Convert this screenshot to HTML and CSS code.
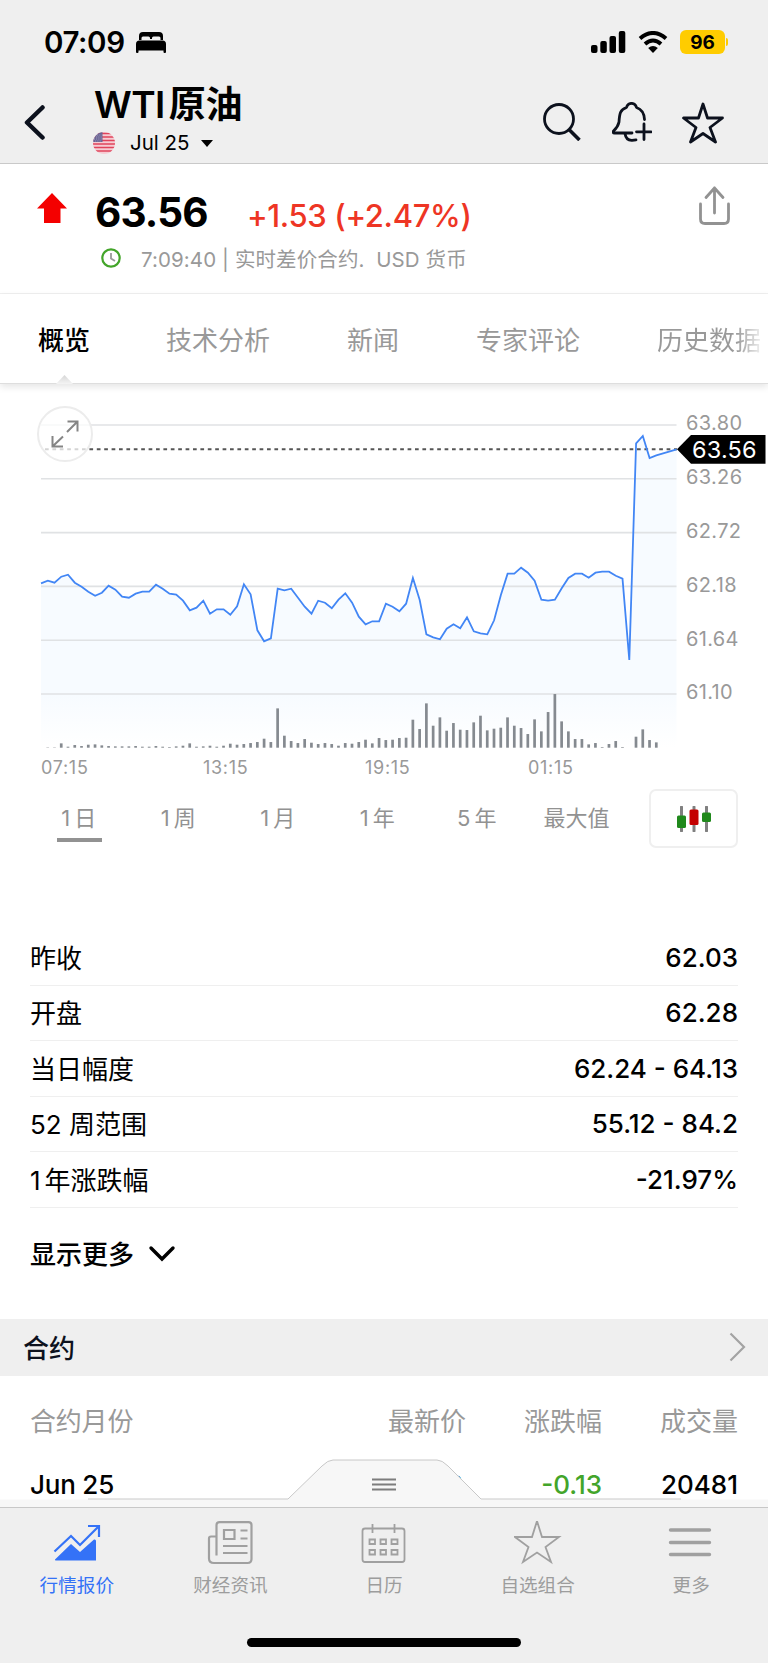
FILE: index.html
```html
<!DOCTYPE html>
<html lang="zh-CN">

<head>
  <meta charset="UTF-8">
  <meta name="viewport" content="width=device-width, initial-scale=1.0">
  <title>WTI原油</title>
  <link rel="stylesheet" href="styles.css">
</head>

<body>
  <header class="header">
    <div class="status-bar">
      <span class="time">07:09</span>
      <svg class="bed" width="30" height="21" viewBox="0 0 30 21">
        <path d="M3 8V4Q3 0 7 0H23Q27 0 27 4V8H24.500V6Q24.500 4.500 23 4.500H17.500Q16 4.500 16 6V7H14V6Q14 4.500 12.500 4.500H7Q5.500 4.500 5.500 6V8Z" />
        <path d="M0 12Q0 8.500 3.500 8.500H26.500Q30 8.500 30 12V20Q30 21 29 21H28.500Q27.500 21 27.500 20V18.500H2.500V20Q2.500 21 1.500 21H1Q0 21 0 20Z" />
      </svg>
      <svg class="signal" width="35" height="22" viewBox="0 0 35 22">
        <rect x="0" y="14" width="6.500" height="8" rx="2" />
        <rect x="9.300" y="10" width="6.500" height="12" rx="2" />
        <rect x="18.500" y="5" width="6.500" height="17" rx="2" />
        <rect x="27.800" y="0" width="6.500" height="22" rx="2" />
      </svg>
      <svg class="wifi" width="30" height="22" viewBox="0 0 30 22">
        <path d="M2 7.500Q15 -3.500 28 7.500" />
        <path d="M7 13Q15 6 23 13" />
        <path class="dot" d="M10.200 17Q15 13 19.800 17L15 22Z" />
      </svg>
      <span class="battery">96</span>
      <span class="battery-tip"></span>
    </div>
    <div class="title-bar">
      <svg class="back" width="21" height="35" viewBox="0 0 21 35">
        <path d="M18.500 2.500L3 17.500L18.500 32.500" />
      </svg>
      <div class="title">
        <h1><span class="latin">WTI</span>原油</h1>
        <div class="contract">
          <svg width="22" height="22" viewBox="0 0 22 22">
            <clipPath id="round"><circle cx="11" cy="11" r="11" /></clipPath>
            <g clip-path="url(#round)">
              <rect width="22" height="22" fill="#f6ccd3" />
              <path d="M0 1.500H22M0 5H22M0 8.500H22M0 12H22M0 15.500H22M0 19H22" stroke="#e0445c" stroke-width="1.300" />
              <rect width="9.500" height="10" fill="#6a6594" />
              <path d="M2 3H9M1 5H9M1 7H9M0 9H9" stroke="#b9b6d2" stroke-width=".8" stroke-dasharray="1 1.200" />
            </g>
          </svg>
          <span>Jul 25</span>
          <i class="caret"></i>
        </div>
      </div>
      <div class="actions">
        <svg width="38" height="38" viewBox="0 0 38 38">
          <circle cx="16" cy="16" r="14.500" />
          <path class="thick" d="M26 26.500L36.500 37" />
        </svg>
        <svg width="40" height="40" viewBox="0 0 40 40">
          <path d="M20 31H2.500Q0.500 31 1.500 29Q6 25 7 20C7.500 12 8 7.500 14.500 5.500C16 0 23 0 24.500 5.500Q32 8 32.500 17.500" />
          <path d="M13 31.500Q14 38.500 20 38.300L24 37.800" />
          <path d="M32 22V37.500M24.500 29.800H39" />
        </svg>
        <svg width="42" height="42" viewBox="0 0 42 42">
          <path d="M21 2L25.500 16H40.500L28 25.500L33.500 40L21 31.500L8.500 40L14 25.500L1.500 16H16.500Z" />
        </svg>
      </div>
    </div>
  </header>

  <section class="quote">
    <svg class="arrow-up" width="30" height="30" viewBox="0 0 30 30">
      <path d="M15 0L30 15.500H23.500V30H7V15.500H0Z" />
    </svg>
    <div class="quote-body">
      <div class="quote-price">
        <span class="last">63.56</span>
        <span class="change">+1.53 (+2.47%)</span>
      </div>
      <div class="quote-info">
        <svg width="20" height="20" viewBox="0 0 20 20">
          <circle cx="10" cy="10" r="8.700" />
          <path d="M10 5V10.500L14 13" />
        </svg>
        <span class="info">7:09:40 | 实时差价合约.&nbsp; USD 货币</span>
      </div>
    </div>
    <svg class="share" width="31" height="39" viewBox="0 0 31 39">
      <path d="M1.500 18V33Q1.500 37.500 6 37.500H25Q29.500 37.500 29.500 33V18M15.500 27V2M7 11.500L15.500 2L24 11.500" />
    </svg>
  </section>

  <nav class="tabs">
    <span class="tab active">概览</span>
    <span class="tab">技术分析</span>
    <span class="tab">新闻</span>
    <span class="tab">专家评论</span>
    <span class="tab">历史数据</span>
  </nav>

  <section class="chart">
    <svg width="768" height="396" viewBox="0 0 768 396">
      <defs>
        <linearGradient id="fill" x1="0" y1="0" x2="0" y2="1">
          <stop offset="0" stop-color="#f7fbff" />
          <stop offset="0.830" stop-color="#f7fbff" />
          <stop offset="1" stop-color="#ffffff" />
        </linearGradient>
      </defs>
      <polygon id="area" fill="url(#fill)" />
      <g id="grid" class="grid"></g>
      <line class="last-line" x1="45" y1="65.300" x2="677" y2="65.300" />
      <g id="volume" class="volume"></g>
      <polyline id="line" class="line" />
      <g id="priceLabels" class="price-label"></g>
      <g class="time-label">
        <text x="41" y="389.500">07:15</text>
        <text x="203" y="389.500">13:15</text>
        <text x="365" y="389.500">19:15</text>
        <text x="528" y="389.500">01:15</text>
      </g>
      <polygon points="677,65.300 691,51 765.500,51 765.500,79.700 691,79.700" />
      <text class="tag-label" x="692" y="73.500">63.56</text>
    </svg>
    <button class="expand">
      <svg width="28" height="28" viewBox="0 0 28 28">
        <path d="M16.500 1.500H26.500V11.500M26.500 1.500L16 12M1.500 16V26.500H12M1.500 26.500L12 16.500" />
      </svg>
    </button>
  </section>

  <div class="ranges">
    <span class="range active"><span class="num">1</span>日</span>
    <span class="range"><span class="num">1</span>周</span>
    <span class="range"><span class="num">1</span>月</span>
    <span class="range"><span class="num">1</span>年</span>
    <span class="range"><span class="num">5</span>年</span>
    <span class="range wide">最大值</span>
    <button class="candle">
      <svg width="36" height="26" viewBox="0 0 36 26">
        <path d="M5.500 1V25M18 1V25M30.500 1V25" stroke="#808080" stroke-width="3" stroke-linecap="round" />
        <rect x="1" y="9.500" width="9" height="12.500" rx="1.500" fill="#20891c" />
        <rect x="13.500" y="3.500" width="9" height="15.500" rx="1.500" fill="#c40000" />
        <rect x="26" y="6.500" width="9" height="9.500" rx="1.500" fill="#20891c" />
      </svg>
    </button>
  </div>

  <section class="stats">
    <div class="stat"><span>昨收</span><b>62.03</b></div>
    <div class="stat"><span>开盘</span><b>62.28</b></div>
    <div class="stat"><span>当日幅度</span><b>62.24 - 64.13</b></div>
    <div class="stat"><span>52 周范围</span><b>55.12 - 84.2</b></div>
    <div class="stat"><span><span class="num">1</span>年涨跌幅</span><b>-21.97%</b></div>
    <div class="more">
      <span>显示更多</span>
      <svg width="28" height="17" viewBox="0 0 28 17">
        <path d="M3 3L14 14L25 3" />
      </svg>
    </div>
  </section>

  <div class="section-title">
    <h2>合约</h2>
    <svg width="17" height="30" viewBox="0 0 17 30">
      <path d="M1.500 1.500L15 15L1.500 28.500" />
    </svg>
  </div>
  <div class="contracts">
    <div class="contract-row head"><span>合约月份</span><span>最新价</span><span>涨跌幅</span><span>成交量</span></div>
    <div class="contract-row"><span>Jun 25</span><span class="price">63.62</span><span class="down">-0.13</span><span>20481</span></div>
  </div>

  <footer class="bottom">
    <svg class="handle" width="768" height="48" viewBox="0 0 768 48">
      <path d="M0 40.500H288L322 7Q328 1 333 1H437Q442 1 448 7L481 40.500H768V48H0Z" fill="#f7f7f7" />
      <path d="M88 40H288L322 7Q328 1 333 1H437Q442 1 448 7L481 40H681" fill="none" stroke="#c8c8c8" />
      <path d="M372 20.500H396M372 25.500H396M372 30.500H396" stroke="#7d7d7d" stroke-width="1.800" />
    </svg>
    <div class="tab-bar">
      <div class="tab-item selected">
        <svg width="48" height="44" viewBox="0 0 48 44">
          <path d="M1.500 30.500L18 15L27 24L45 6M35 5H46V16" fill="none" stroke="#3472f7" stroke-width="2.600" />
          <path d="M2 38.500L18 23L27 31L41 18.500Q43 18 43 20V39.500H3Q1.500 39.500 2 38.500Z" fill="#3472f7" />
        </svg>
        <span>行情报价</span>
      </div>
      <div class="tab-item">
        <svg width="48" height="44" viewBox="0 0 48 44">
          <path d="M10.500 34.500V4Q10.500 1.200 13.500 1.200H42.500Q45.500 1.200 45.500 4V38Q45.500 42 41.500 42H8Q3 42 3 37.500V17.500Q3 15.500 5 15.500H10.500M18 9H28.500V18H18ZM34.500 9.500H41.500M34.500 17.500H41.500M17 25H41.500M17 32H41.500" />
        </svg>
        <span>财经资讯</span>
      </div>
      <div class="tab-item">
        <svg width="48" height="44" viewBox="0 0 48 44">
          <path class="thin" d="M2.500 10Q2.500 7.500 5 7.500H42Q44.500 7.500 44.500 10V38.500Q44.500 41 42 41H5Q2.500 41 2.500 38.500ZM12.500 3V12M34.500 3V12M9.500 18.500H15V23H9.500ZM20.500 18.500H26V23H20.500ZM31.500 18.500H37.500V23H31.500ZM9.500 29H15V33.500H9.500ZM20.500 29H26V33.500H20.500ZM31.500 29H37.500V33.500H31.500Z" />
        </svg>
        <span>日历</span>
      </div>
      <div class="tab-item">
        <svg width="48" height="44" viewBox="0 0 48 44">
          <path class="thin" d="M23 0L28 16H45L31.500 26L37 41L23 31.500L9 41L14.500 26L1 16H18Z" />
        </svg>
        <span>自选组合</span>
      </div>
      <div class="tab-item">
        <svg width="48" height="44" viewBox="0 0 48 44">
          <path class="bars" d="M3.500 9H42.500M3.500 21.500H42.500M3.500 33.500H42.500" />
        </svg>
        <span>更多</span>
      </div>
    </div>
    <div class="home-indicator"></div>
  </footer>

  <script>
    // plot values are stored at 3 units per pixel, measured from the top
    const prices = [610, 602, 608, 590, 584, 608, 620, 635, 647, 638, 617, 629, 650, 653, 641, 635, 635, 614, 626, 641,
      644, 662, 691, 683, 662, 701, 688, 688, 704, 679, 613, 643, 751, 784, 775, 626, 631, 626, 653, 680,
      701, 662, 668, 685, 659, 640, 668, 710, 733, 724, 724, 671, 680, 694, 671, 594, 660, 763, 772, 778,
      746, 733, 745, 712, 754, 760, 763, 721, 646, 581, 581, 563, 578, 602, 659, 662, 659, 625, 594, 581,
      581, 593, 578, 575, 575, 587, 596, 840, 190, 168, 234, 226, 220, 214, 208];
    const volumes = [0, 1, 1, 13, 3, 8, 5, 9, 10, 7, 5, 4, 4, 4, 5, 3, 3, 5, 3, 2,
      4, 6, 13, 3, 4, 6, 3, 6, 12, 9, 11, 14, 17, 27, 17, 118, 36, 20, 14, 26,
      15, 11, 14, 11, 6, 14, 12, 17, 24, 13, 29, 23, 24, 29, 30, 84, 56, 133, 66, 91,
      51, 74, 54, 53, 76, 96, 52, 57, 60, 91, 66, 59, 41, 85, 49, 107, 161, 79, 49, 26,
      26, 10, 14, 2, 11, 20, 2, 0, 33, 55, 23, 16];
    const left = 41;
    const step = 6.762;
    const bottom = 363.7;

    const points = prices.map((v, i) => `${(left + i * step).toFixed(1)},${(v / 3 - 4).toFixed(1)}`).join(" ");
    document.getElementById("line").setAttribute("points", points);
    document.getElementById("area").setAttribute("points", `${left},${bottom} ${points} 676.5,${bottom}`);

    let bars = "";
    volumes.forEach((v, i) => {
      if (v > 0) bars += `<rect x="${left + i * step - 1.4}" y="${bottom - v / 3}" width="2.7" height="${v / 3}" />`;
    });
    document.getElementById("volume").innerHTML = bars;

    let grid = "";
    let labels = "";
    ["63.80", "63.26", "62.72", "62.18", "61.64", "61.10"].forEach((price, i) => {
      const y = 41 + i * 53.8;
      grid += `<line x1="${left}" y1="${y}" x2="676.5" y2="${y}" />`;
      labels += `<text x="686" y="${y + 5.3}">${price}</text>`;
    });
    document.getElementById("grid").innerHTML = grid;
    document.getElementById("priceLabels").innerHTML = labels;
  </script>
</body>

</html>
```
FILE: styles.css
```css
* {
  box-sizing: border-box;
}

body {
  font-family: Inter, "Noto Sans CJK SC", sans-serif;
  margin: 0;
  width: 768px;
  height: 1663px;
  overflow: hidden;
  position: relative;
  background-color: #fff;
  color: #000;
}

svg {
  display: block;
  flex-shrink: 0;
}

button {
  padding: 0;
  background: none;
}

.num {
  margin-right: 4px;
}

.header {
  height: 164px;
  background-color: #efefef;
  border-bottom: 1px solid #c9c9c9;
}

.status-bar {
  display: flex;
  align-items: center;
  height: 84px;
  padding: 0 40px 0 44px;
}

.time {
  font-size: 29.5px;
  font-weight: 600;
  width: 92px;
  letter-spacing: -0.4px;
}

.signal {
  margin-left: auto;
}

.wifi {
  margin: 0 12px;
}

.wifi path {
  fill: none;
  stroke: #000;
  stroke-width: 4;
}

.wifi .dot {
  fill: #000;
  stroke: none;
}

.battery {
  width: 45px;
  height: 24px;
  border-radius: 6px;
  background-color: #ffcc00;
  text-align: center;
  font-size: 19px;
  line-height: 25px;
  font-weight: 700;
}

.battery-tip {
  width: 2px;
  height: 8px;
  margin-left: 1px;
  border-radius: 0 3px 3px 0;
  background-color: #ffcc00;
}

.title-bar {
  display: flex;
  height: 79px;
  padding: 0 44px 0 24px;
}

.back {
  margin-top: 21px;
}

.back path {
  fill: none;
  stroke: #0c111d;
  stroke-width: 4.5;
  stroke-linecap: round;
  stroke-linejoin: round;
}

.title {
  margin-left: 49px;
}

h1 {
  margin: 0;
  font-size: 37px;
  line-height: 42px;
  font-weight: 600;
}

h1 .latin {
  letter-spacing: -0.6px;
  margin-right: 4px;
}

.contract {
  display: flex;
  align-items: center;
  height: 34px;
  margin-left: -1px;
  font-size: 20.5px;
}

.contract span {
  margin: -2px 11px 0 15px;
}

.caret {
  border: 6.5px solid transparent;
  border-top: 7px solid #000;
  border-bottom: 0;
}

.actions {
  display: flex;
  gap: 30px;
  margin-left: auto;
  padding-top: 18px;
}

.actions svg {
  fill: none;
  stroke: #0c111d;
  stroke-width: 2.8;
  stroke-linejoin: round;
  stroke-linecap: round;
}

.actions svg:first-child {
  margin: 1px 1px 0 0;
}

.actions .thick {
  stroke-width: 3.6;
  stroke-linecap: butt;
}

.quote {
  display: flex;
  height: 130px;
  padding: 0 38px 0 37px;
  border-bottom: 1px solid #f0f0f0;
}

.arrow-up {
  margin-top: 29px;
  fill: #f40000;
}

.quote-body {
  margin-left: 28px;
  padding-top: 25px;
}

.quote-price {
  display: flex;
  align-items: baseline;
  height: 50px;
}

.last {
  font-size: 40.5px;
  line-height: 48px;
  font-weight: 700;
  width: 152px;
  letter-spacing: -0.9px;
}

.change {
  color: #ee3524;
  font-size: 31px;
  font-weight: 500;
  letter-spacing: -0.35px;
}

.quote-info {
  display: flex;
  align-items: center;
  margin: 4px 0 0 6px;
  height: 30px;
}

.quote-info svg {
  fill: none;
  stroke: #43a52a;
  stroke-width: 2.2;
}

.quote-info path {
  stroke: #999;
  stroke-width: 1.8;
}

.info {
  margin-left: 20px;
  color: #999;
  font-size: 20.5px;
  letter-spacing: 0.1px;
}

.share {
  margin: 22px 0 0 auto;
  fill: none;
  stroke: #929292;
  stroke-width: 2.8;
  stroke-linecap: round;
  stroke-linejoin: round;
}

.tabs {
  position: relative;
  display: flex;
  height: 90px;
  padding-left: 38px;
  font-size: 26px;
  line-height: 94px;
  color: #999;
  white-space: nowrap;
  border-bottom: 1px solid #dedede;
  box-shadow: 0 3px 7px rgba(0, 0, 0, 0.1);
}

.tab {
  margin-right: 77px;
  flex-shrink: 0;
}

.tab.active {
  margin-right: 76px;
  color: #000;
  font-weight: 500;
}

.tab:last-child {
  margin-right: 0;
  background: linear-gradient(90deg, #999 76%, #eee 100%);
  background-clip: text;
  color: transparent;
}

/* notch under the active tab */
.tabs::after {
  content: "";
  position: absolute;
  left: 56px;
  bottom: -1px;
  width: 17px;
  height: 9px;
  background: linear-gradient(#d6d6d6, #f4f4f4);
  clip-path: polygon(50% 0, 100% 100%, 0 100%);
}

.chart {
  position: relative;
  height: 396px;
}

.grid line {
  stroke: #e0e2e4;
  stroke-width: 1.6;
}

.last-line {
  stroke: #555;
  stroke-width: 2;
  stroke-dasharray: 3.7 3.7;
}

.volume {
  fill: #858a90;
}

.line {
  fill: none;
  stroke: #4286f5;
  stroke-width: 1.8;
}

.price-label {
  font-size: 20px;
  letter-spacing: 0.35px;
  fill: #999;
}

.time-label {
  font-size: 18px;
  letter-spacing: 0.7px;
  fill: #999;
}

.tag-label {
  font-size: 23.5px;
  letter-spacing: 0.2px;
  fill: #fff;
}

.expand {
  position: absolute;
  left: 37px;
  top: 22px;
  width: 56px;
  height: 56px;
  display: flex;
  align-items: center;
  justify-content: center;
  border: 2px solid #ececec;
  border-radius: 50%;
  background-color: rgba(255, 255, 255, 0.75);
}

.expand path {
  fill: none;
  stroke: #858585;
  stroke-width: 2;
}

.ranges {
  display: flex;
  height: 79px;
  padding: 9px 30px 0 29px;
  font-size: 22px;
  line-height: 58px;
  color: #929292;
}

.range {
  width: 99.5px;
  text-align: center;
  position: relative;
}

.range.wide {
  width: 100px;
}

.range.active::after {
  content: "";
  position: absolute;
  left: 28px;
  top: 49px;
  width: 45px;
  height: 4px;
  background-color: #929292;
}

.candle {
  width: 89px;
  height: 59px;
  margin-left: auto;
  display: flex;
  align-items: center;
  justify-content: center;
  border: 2px solid #efefef;
  border-radius: 7px;
}

.stats {
  height: 460px;
  padding: 71px 30px 0;
  font-size: 26px;
}

.stat {
  display: flex;
  align-items: center;
  justify-content: space-between;
  height: 55.5px;
  border-bottom: 1px solid #efefef;
}

.stat > span {
  margin-top: -2px;
}

.stat b {
  font-weight: 500;
}

.more {
  display: flex;
  align-items: center;
  height: 91px;
  font-weight: 500;
}

.more span {
  margin-top: -2px;
}

.more svg {
  margin-left: 14px;
  fill: none;
  stroke: #000;
  stroke-width: 3.4;
  stroke-linecap: round;
}

.section-title {
  display: flex;
  align-items: center;
  justify-content: space-between;
  height: 57px;
  padding: 0 22px 0 23px;
  background-color: #efefef;
}

.section-title svg {
  margin-top: -1px;
  fill: none;
  stroke: #a3a3a3;
  stroke-width: 2.2;
}

h2 {
  margin: -3px 0 0;
  color: #0c111d;
  font-size: 26px;
  font-weight: 500;
}

.contracts {
  padding: 14px 30px 0;
}

.contract-row {
  display: grid;
  grid-template-columns: 300px 136px 136px 136px;
  height: 63px;
  line-height: 63px;
  font-size: 26px;
  font-weight: 500;
  text-align: right;
}

.contract-row span:first-child {
  text-align: left;
  letter-spacing: -0.2px;
}

.contract-row.head {
  color: #999;
  font-weight: 400;
}

.contract-row .price {
  padding-right: 3px;
}

.contract-row .down {
  color: #43a52a;
}

.bottom {
  position: absolute;
  left: 0;
  bottom: 0;
  width: 768px;
  height: 204px;
}

.tab-bar {
  display: flex;
  height: 156px;
  padding-top: 13px;
  background-color: #efefef;
  border-top: 1px solid #c8c8c8;
}

.tab-item {
  flex: 1;
  display: flex;
  flex-direction: column;
  align-items: center;
  gap: 7px;
  color: #9d9d9d;
  font-size: 18.6px;
  line-height: 26px;
}

.tab-item path {
  stroke-width: 2.2;
}

.tab-item:not(.selected) path {
  fill: none;
  stroke: #a0a0a0;
}

.tab-item .thin {
  stroke-width: 1.8;
}

.tab-item .bars {
  stroke-width: 3.4;
  stroke-linecap: round;
}

.selected {
  color: #3472f7;
}

.home-indicator {
  position: absolute;
  left: 247px;
  bottom: 16px;
  width: 274px;
  height: 9px;
  border-radius: 5px;
  background-color: #000;
}
```
